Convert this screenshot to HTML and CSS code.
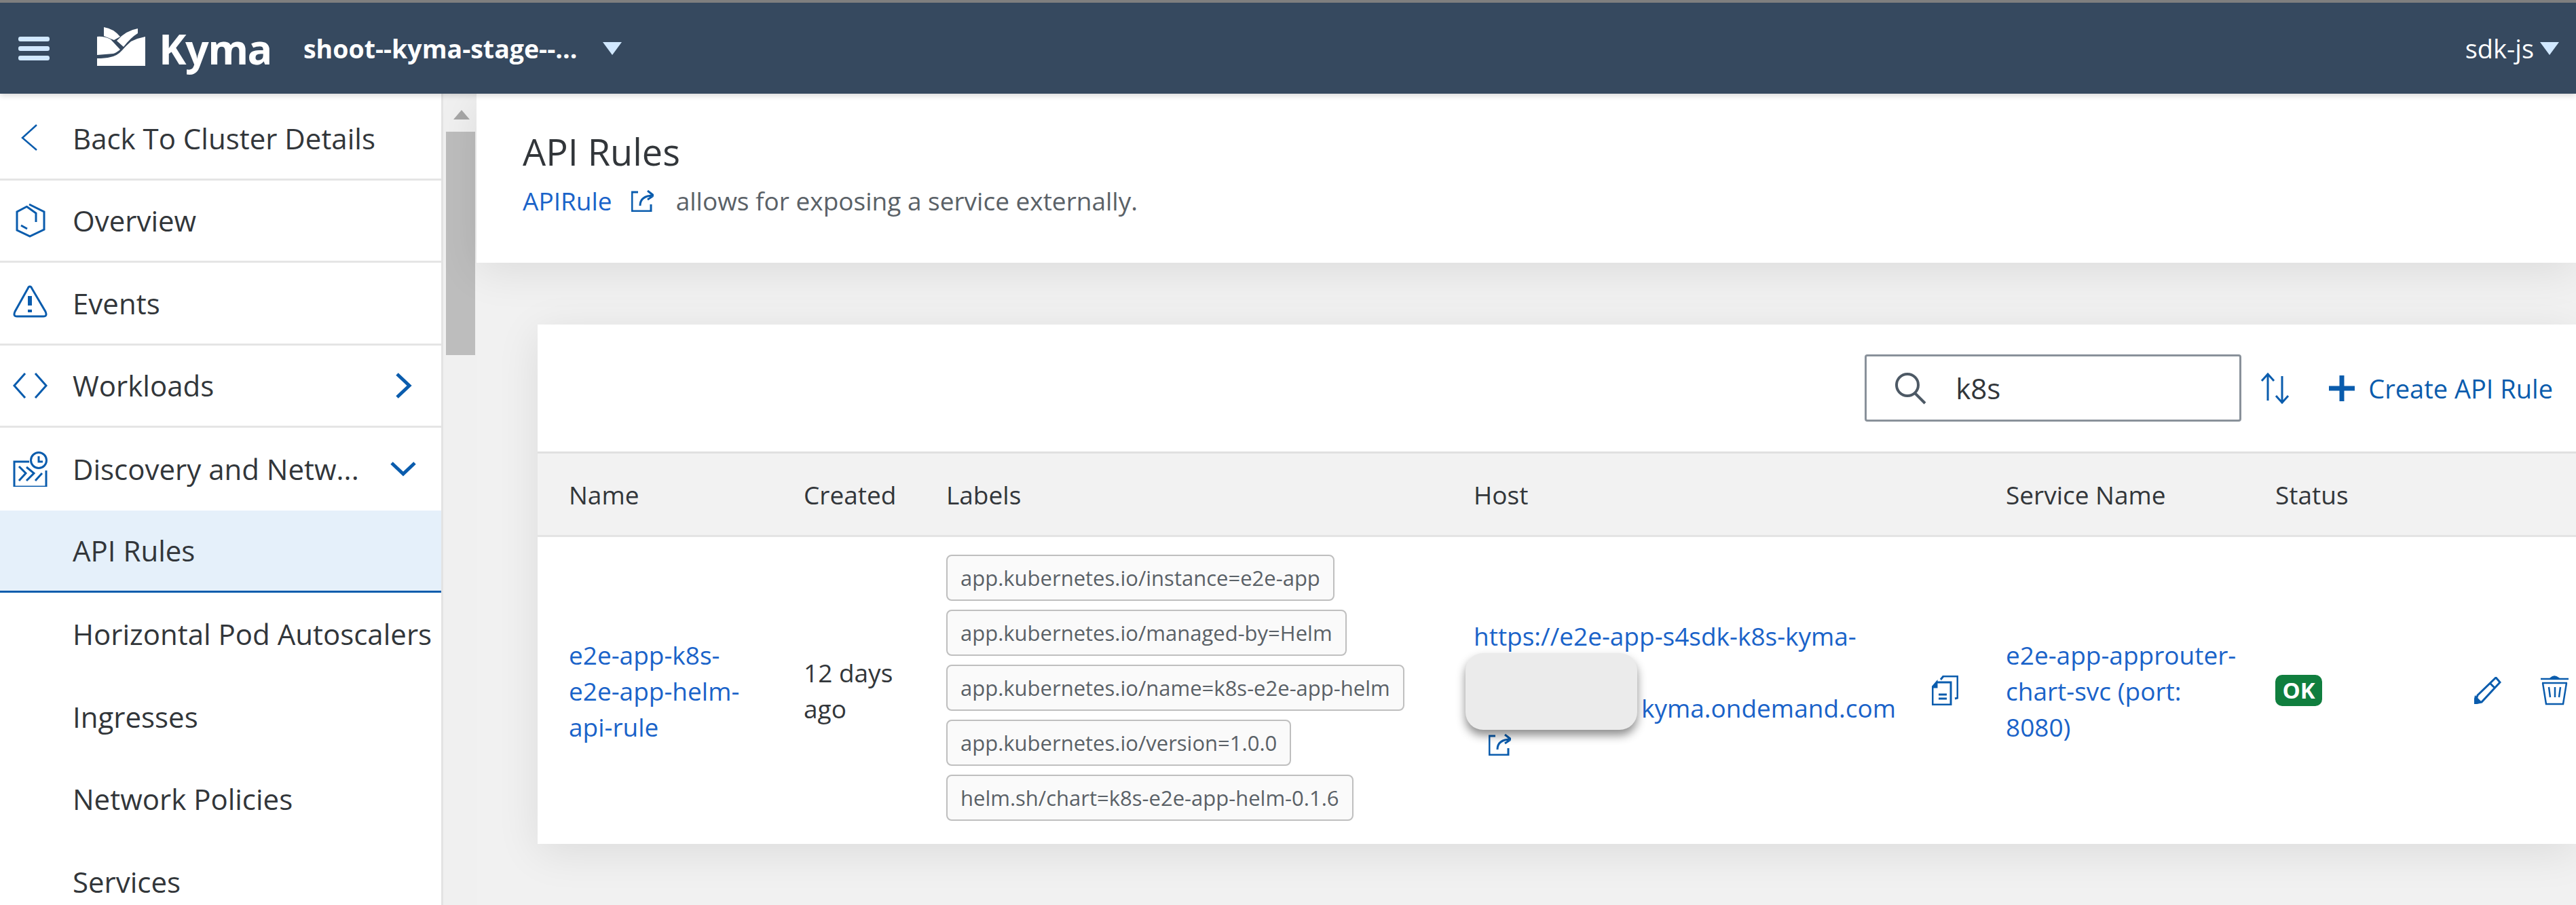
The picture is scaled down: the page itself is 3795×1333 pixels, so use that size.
FILE: index.html

```html
<!DOCTYPE html>
<html>
<head>
    <title>API Rules - Kyma</title>
    <link rel="stylesheet" href="styles.css">
</head>
<body>
    <header class="topbar">
        <svg class="burger" viewBox="0 0 46 35"><rect y="0" width="46" height="7" rx="3"/><rect y="14" width="46" height="7" rx="3"/><rect y="28" width="46" height="7" rx="3"/></svg>
        <svg class="logo" viewBox="0 0 71 59"><path d="M10 1 Q24 3 34 15 L25 20 Q15 16 10 14Z"/><path d="M60 3 V10 Q50 16 39 30 L29 21 Q42 6 60 3Z"/><path d="M0 15 Q10 14 20 19 L34 34 Q28 39 24 40 L0 42Z"/><path d="M71 15 V58 H0 V47 Q12 47 20 45 Q30 43 37 35 Q42 29 50 22 Q60 17 71 15Z"/></svg>
        <span class="brand">Kyma</span>
        <span class="cluster">shoot--kyma-stage--...</span>
        <i class="caret cluster-caret"></i>
        <span class="namespace">sdk-js</span>
        <i class="caret"></i>
    </header>

    <div class="main">
        <nav class="sidebar">
            <ul class="nav">
                <li class="nav-row line">
                    <svg class="ico thin" viewBox="0 0 52 52"><path d="M36 7 L15 26 L36 44"/></svg>
                    <span>Back To Cluster Details</span>
                </li>
                <li class="nav-row line">
                    <svg class="ico" viewBox="0 0 52 52"><path d="M22 5 L7 13 V40 L26 49 L47 39 V13 L25 2 M21 5 L35 15 V28 M13 33 L22 38"/></svg>
                    <span>Overview</span>
                </li>
                <li class="nav-row line">
                    <svg class="ico" viewBox="0 0 52 52"><path d="M26 2 Q24 2 23 5 L4 39 Q1 46 7 46 H46 Q52 46 49 39 L29 5 Q28 2 26 2Z"/><path class="fat" d="M26 16 V30 M26 36 V40"/></svg>
                    <span>Events</span>
                </li>
                <li class="nav-row line">
                    <svg class="ico" viewBox="0 0 52 52"><path d="M19 8 L3 26 L19 44 M34 8 L50 26 L34 44"/></svg>
                    <span>Workloads</span>
                    <svg class="chev" viewBox="0 0 40 40"><path d="M11 3 L29 20 L11 37"/></svg>
                </li>
                <li class="nav-row">
                    <svg class="ico" viewBox="0 0 52 52"><path d="M25 15 H3 V52 H50 V28"/><circle cx="39" cy="13" r="11.5"/><path d="M39 7 V15 H45 M10 22 L20 32 L10 43 M21 23 L32 32 L21 43 M44 32 L34 43"/></svg>
                    <span>Discovery and Netw...</span>
                    <svg class="chev" viewBox="0 0 40 40"><path d="M3 11 L20 27 L37 11"/></svg>
                </li>
                <li class="nav-row active"><span>API Rules</span></li>
                <li class="nav-row"><span>Horizontal Pod Autoscalers</span></li>
                <li class="nav-row"><span>Ingresses</span></li>
                <li class="nav-row"><span>Network Policies</span></li>
                <li class="nav-row"><span>Services</span></li>
            </ul>
            <div class="scrollbar">
                <i class="scroll-up"></i>
                <div class="thumb"></div>
            </div>
        </nav>

        <main class="page">
            <section class="page-head">
                <h1>API Rules</h1>
                <p class="intro">
                    <a class="link" href="#">APIRule</a>
                    <svg class="ext" viewBox="0 0 33 32"><path d="M10 3 H1 V31 H29 V21 M13 23 Q13 8 33 8 M24 1 L33 8 L24 14"/></svg>
                    <span class="intro-text">allows for exposing a service externally.</span>
                </p>
            </section>

            <section class="card">
                <div class="toolbar">
                    <div class="search">
                        <svg class="search-ico" viewBox="0 0 48 48"><circle cx="19" cy="19" r="16"/><path d="M30 31 L45 46"/></svg>
                        <span>k8s</span>
                    </div>
                    <svg class="sort" viewBox="0 0 48 48"><path d="M13 42 V3 M4 13 L13 3 L22 13 M34 6 V45 M25 35 L34 45 L43 35"/></svg>
                    <div class="create">
                        <svg class="plus" viewBox="0 0 42 42"><path d="M21 2 V40 M2 21 H40"/></svg>
                        <span>Create API Rule</span>
                    </div>
                </div>

                <div class="row head">
                    <div>Name</div>
                    <div>Created</div>
                    <div>Labels</div>
                    <div>Host</div>
                    <div>Service Name</div>
                    <div>Status</div>
                    <div></div>
                </div>

                <div class="row body">
                    <div><a class="link" href="#">e2e-app-k8s-<br>e2e-app-helm-<br>api-rule</a></div>
                    <div>12 days<br>ago</div>
                    <div class="labels">
                        <span class="tag">app.kubernetes.io/instance=e2e-app</span>
                        <span class="tag">app.kubernetes.io/managed-by=Helm</span>
                        <span class="tag">app.kubernetes.io/name=k8s-e2e-app-helm</span>
                        <span class="tag">app.kubernetes.io/version=1.0.0</span>
                        <span class="tag">helm.sh/chart=k8s-e2e-app-helm-0.1.6</span>
                    </div>
                    <div class="host">
                        <div class="host-text">
                            <a class="link" href="#">https://e2e-app-s4sdk-k8s-kyma-<br>&nbsp;<br><span class="host-end">kyma.ondemand.com</span></a>
                            <svg class="ext host-ext" viewBox="0 0 33 32"><path d="M10 3 H1 V31 H29 V21 M13 23 Q13 8 33 8 M24 1 L33 8 L24 14"/></svg>
                            <div class="redact"></div>
                        </div>
                        <svg class="copy" viewBox="0 0 39 44"><path class="solid" d="M7 10 L1 17 H7Z"/><path d="M7 10 H28 V43 H1 V17 M10 28 H22 M10 34 H22 M13 6 L17 1 H38 V33 L34 34"/></svg>
                    </div>
                    <div><a class="link" href="#">e2e-app-approuter-<br>chart-svc (port:<br>8080)</a></div>
                    <div><span class="badge">OK</span></div>
                    <div class="actions">
                        <svg class="edit" viewBox="0 0 40 40"><path class="solid" d="M0 39 L2 30 L9 37Z"/><path d="M5 27 L32 1 L38 8 L11 37 L1 39Z M23 9 L31 17"/></svg>
                        <svg class="trash" viewBox="0 0 41 46"><path class="solid" d="M15 5 Q20 0 26 5Z"/><path d="M0 6 H41 M2 12 H39 M3 12 L8 43 H33 L38 12 M12 18 L14 33 M21 18 V33 M29 18 L27 33"/></svg>
                    </div>
                </div>
            </section>
        </main>
    </div>
</body>
</html>
```

FILE: styles.css

```css
* {box-sizing: border-box;}

html, body {height: 100%;}

body {margin: 0;
      overflow: hidden;
      background-color: #f1f1f1;
      color: #32363a;
      font-family: "Open Sans", "Noto Sans", sans-serif;
      font-size: 42px;}

svg {fill: none;
     stroke: #0a5cad;
     stroke-width: 3;
     flex-shrink: 0;}

svg .solid {fill: #0a5cad;}

.link {color: #1a63c9;
       text-decoration: none;}

/* top bar */
.topbar {display: flex;
         align-items: center;
         height: 138px;
         padding-left: 27px;
         padding-right: 25px;
         background-color: #36495f;
         border-top: 4px solid #7f7f7f;
         color: #fff;
         position: relative;
         z-index: 3;
         box-shadow: 0 3px 8px rgba(0,0,0,.15);}

.burger {width: 46px;
         height: 35px;
         fill: #d1e8ff;
         stroke: none;}

.logo {width: 71px;
       height: 59px;
       margin-left: 70px;
       margin-top: -6px;
       fill: #fff;
       stroke: none;}

.brand {margin-left: 20px;
        font-size: 61px;
        font-weight: 700;
        letter-spacing: -1.5px;}

.cluster {margin-left: 47px;
          font-size: 37.5px;
          font-weight: 700;}

.caret {width: 0;
        height: 0;
        margin-left: 9px;
        border-left: 14px solid transparent;
        border-right: 14px solid transparent;
        border-top: 19px solid #d1e8ff;}

.cluster-caret {margin-left: 38px;}

.namespace {margin-left: auto;
            font-size: 38px;}

/* sidebar */
.main {display: flex;
       height: 1195px;}

.sidebar {display: flex;
          width: 702px;
          flex-shrink: 0;
          background-color: #fff;}

.nav {width: 650px;
      margin: 0;
      padding: 6px 0 0;
      list-style: none;
      overflow: hidden;}

.nav-row {display: flex;
          align-items: center;
          height: 121.5px;
          padding-left: 107px;
          position: relative;
          white-space: nowrap;}

.line {border-bottom: 3px solid #e5e5e5;}

.active {background-color: #e5f0fa;
         border-bottom: 3px solid #0a5cad;}

.ico {position: absolute;
      left: 18px;
      width: 52px;
      height: 52px;}

.ico .fat {stroke-width: 6;}

.thin {stroke-width: 2.5;}

.chev {width: 40px;
       height: 40px;
       position: absolute;
       left: 574px;
       stroke-width: 5;}

.scrollbar {width: 52px;
            background-color: #f0f0f0;
            border-left: 3px solid #e3e3e3;
            padding: 24px 0 0 4px;}

.scroll-up {display: block;
            width: 0;
            height: 0;
            margin-left: 11px;
            border-left: 12px solid transparent;
            border-right: 12px solid transparent;
            border-bottom: 14px solid #a6a6a6;}

.thumb {width: 43px;
        height: 329px;
        margin-top: 18px;
        background-color: #bdbdbd;}

/* page */
.page {flex: 1;
       min-width: 0;}

.page-head {height: 249px;
            padding: 48px 0 0 68px;
            background-color: #fff;
            box-shadow: 0 12px 60px rgba(0,0,0,.09);}

h1 {margin: 0;
    font-size: 54px;
    font-weight: 400;}

.intro {display: flex;
        align-items: center;
        margin: 10px 0 0;
        font-size: 37px;}

.ext {width: 33px;
      height: 32px;
      margin-left: 28px;}

.intro-text {margin-left: 33px;
             color: #5a6167;}

.card {margin: 91px 0 0 90px;
       background-color: #fff;
       box-shadow: 0 12px 60px rgba(0,0,0,.09);}

.toolbar {display: flex;
          align-items: center;
          height: 190px;
          padding-right: 34px;
          justify-content: flex-end;
          border-bottom: 3px solid #e0e0e0;}

.search {display: flex;
         align-items: center;
         width: 555px;
         height: 99px;
         padding-left: 41px;
         border: 3px solid #89919a;
         border-radius: 4px;}

.search-ico {width: 48px;
             height: 48px;
             stroke: #4d5965;
             stroke-width: 4;
             margin-right: 42px;}

.sort {width: 48px;
       height: 48px;
       margin-left: 26px;}

.create {display: flex;
         align-items: center;
         margin-left: 53px;
         color: #0a5cad;
         font-size: 38px;}

.plus {width: 42px;
       height: 42px;
       stroke-width: 7;
       margin-right: 18px;}

.row {display: grid;
      grid-template-columns: 346px 210px 777px 784px 397px 293px 1fr;
      padding-left: 46px;
      align-items: center;
      font-size: 37px;
      line-height: 53px;}

.head {height: 123px;
       background-color: #f2f2f2;
       border-bottom: 3px solid #e4e4e4;}

.body {height: 452px;}

.labels {display: flex;
         flex-direction: column;
         align-items: flex-start;
         gap: 13px;
         margin-bottom: 8px;}

.tag {height: 68px;
      padding: 0 19px;
      line-height: 64px;
      font-size: 31px;
      color: #5a6167;
      background-color: #fafafa;
      border: 2px solid #bfbfbf;
      border-radius: 8px;
      white-space: nowrap;}

.host {display: flex;
       align-items: center;}

.host-text {width: 675px;
            margin-bottom: 12px;
            position: relative;}

.host-end {display: inline-block;
           padding-left: 247px;}

.host-ext {display: block;
           margin: 12px 0 0 22px;}

/* blurred box that hides part of the host in the screenshot */
.redact {position: absolute;
         left: -12px;
         top: 52px;
         width: 253px;
         height: 113px;
         background-color: #ebebeb;
         border-radius: 26px;
         box-shadow: 0 8px 14px rgba(0,0,0,.45);}

.copy {width: 39px;
       height: 44px;}

.badge {display: block;
        width: 69px;
        height: 46px;
        line-height: 46px;
        text-align: center;
        background-color: #107e3e;
        color: #fff;
        font-size: 33px;
        font-weight: 700;
        border-radius: 10px;}

.actions {display: flex;
          align-items: center;
          gap: 58px;}

.edit {width: 40px;
       height: 40px;}

.trash {width: 41px;
        height: 46px;
        stroke-width: 2.5;}
```
